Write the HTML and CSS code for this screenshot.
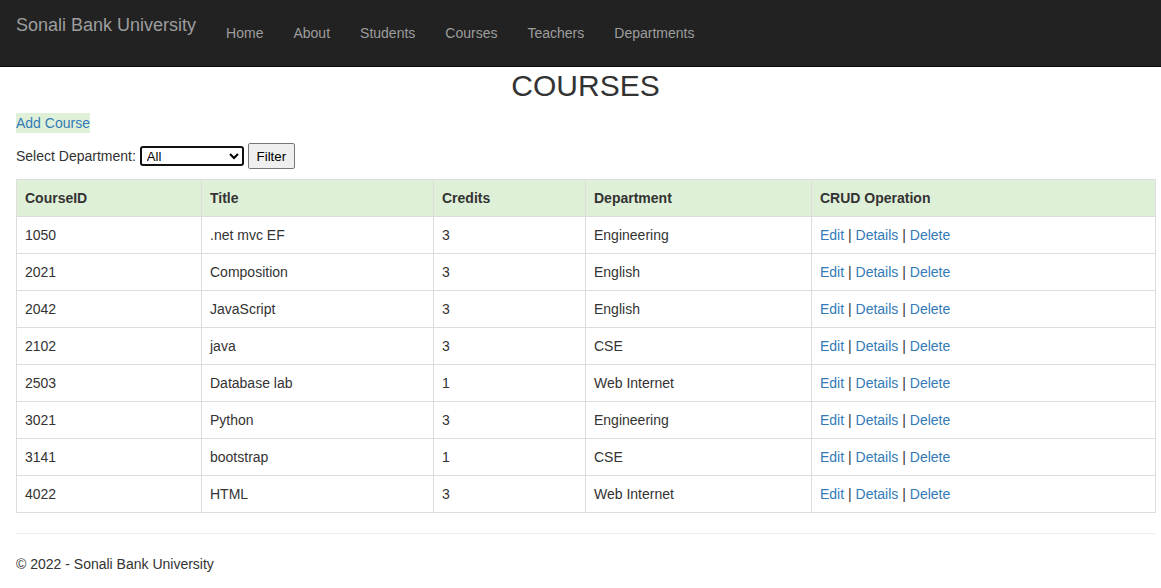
FILE: index.html
```html
<!DOCTYPE html>
<html>
<head>
<meta charset="utf-8">
<title>Courses</title>
<link rel="stylesheet" href="styles.css">
</head>
<body>
<header class="navbar">
  <a class="brand" href="#">Sonali Bank University</a>
  <nav class="nav">
    <a href="#">Home</a>
    <a href="#">About</a>
    <a href="#">Students</a>
    <a href="#">Courses</a>
    <a href="#">Teachers</a>
    <a href="#">Departments</a>
  </nav>
</header>
<main class="container">
  <h2 class="title">COURSES</h2>
  <p class="add-line"><a class="add" href="#">Add Course</a></p>
  <form class="filter">
    <label>Select Department:</label>
    <select class="dept"><option>All</option></select>
    <button type="button" class="btn">Filter</button>
  </form>
  <table class="table">
    <colgroup>
      <col class="c1"><col class="c2"><col class="c3"><col class="c4"><col class="c5">
    </colgroup>
    <thead>
      <tr><th>CourseID</th><th>Title</th><th>Credits</th><th>Department</th><th>CRUD Operation</th></tr>
    </thead>
    <tbody>
      <tr><td>1050</td><td>.net mvc EF</td><td>3</td><td>Engineering</td><td><a href="#">Edit</a> | <a href="#">Details</a> | <a href="#">Delete</a></td></tr>
      <tr><td>2021</td><td>Composition</td><td>3</td><td>English</td><td><a href="#">Edit</a> | <a href="#">Details</a> | <a href="#">Delete</a></td></tr>
      <tr><td>2042</td><td>JavaScript</td><td>3</td><td>English</td><td><a href="#">Edit</a> | <a href="#">Details</a> | <a href="#">Delete</a></td></tr>
      <tr><td>2102</td><td>java</td><td>3</td><td>CSE</td><td><a href="#">Edit</a> | <a href="#">Details</a> | <a href="#">Delete</a></td></tr>
      <tr><td>2503</td><td>Database lab</td><td>1</td><td>Web Internet</td><td><a href="#">Edit</a> | <a href="#">Details</a> | <a href="#">Delete</a></td></tr>
      <tr><td>3021</td><td>Python</td><td>3</td><td>Engineering</td><td><a href="#">Edit</a> | <a href="#">Details</a> | <a href="#">Delete</a></td></tr>
      <tr><td>3141</td><td>bootstrap</td><td>1</td><td>CSE</td><td><a href="#">Edit</a> | <a href="#">Details</a> | <a href="#">Delete</a></td></tr>
      <tr><td>4022</td><td>HTML</td><td>3</td><td>Web Internet</td><td><a href="#">Edit</a> | <a href="#">Details</a> | <a href="#">Delete</a></td></tr>
    </tbody>
  </table>
  <hr class="rule">
  <footer class="footer"><p>&copy; 2022 - Sonali Bank University</p></footer>
</main>
</body>
</html>
```

FILE: styles.css
```css
* { box-sizing: border-box; }
html, body { margin: 0; padding: 0; }
body {
  font-family: "Liberation Sans", Arial, Helvetica, sans-serif;
  font-size: 14px;
  line-height: 20px;
  color: #333;
  background: #fff;
}
a { color: #337ab7; text-decoration: none; }

.navbar {
  display: flex;
  align-items: flex-start;
  height: 67px;
  background: #222;
  border-bottom: 1px solid #080808;
  padding: 0 16px;
}
.brand {
  color: #9d9d9d;
  font-size: 18px;
  line-height: 20px;
  padding: 15px 15px 0 0;
}
.nav { display: flex; }
.nav a {
  color: #9d9d9d;
  font-size: 14px;
  line-height: 20px;
  padding: 23px 15px 0;
}

.container { padding: 0 6px 0 16px; }
.title {
  margin: 2px 0 11px;
  text-align: center;
  font-size: 30px;
  font-weight: 500;
  line-height: 33px;
  color: #333;
}
.add-line { margin: 0 0 10px; height: 20px; }
.add {
  display: inline-block;
  background: #dff0d8;
  line-height: 20px;
}
.filter {
  display: flex;
  align-items: center;
  height: 26px;
  margin: 0 0 10px;
}
.filter label { margin-right: 4px; }
.dept {
  width: 104px;
  height: 20px;
  border: 2px solid #111;
  border-radius: 3px;
  font-family: "Liberation Sans", Arial, sans-serif;
  font-size: 13px;
  padding: 0 0 0 1px;
  background: #fff;
  color: #000;
  margin-right: 4px;
}
.btn {
  height: 26px;
  width: 47px;
  padding: 0;
  border: 1px solid #767676;
  border-radius: 2px;
  background: #efefef;
  font-family: "Liberation Sans", Arial, sans-serif;
  font-size: 13.33px;
  color: #000;
}

.table {
  width: 1139px;
  border-collapse: collapse;
  table-layout: fixed;
  border: 1px solid #ddd;
}
.c1 { width: 185px; }
.c2 { width: 232px; }
.c3 { width: 152px; }
.c4 { width: 226px; }
.c5 { width: 344px; }
.table th, .table td {
  border: 1px solid #ddd;
  padding: 8px;
  line-height: 20px;
  text-align: left;
  vertical-align: top;
}
.table thead th { background: #dff0d8; font-weight: bold; }

.rule {
  margin: 20px 0;
  border: 0;
  border-top: 1px solid #eee;
}
.footer p { margin: 0 0 10px; }
```
